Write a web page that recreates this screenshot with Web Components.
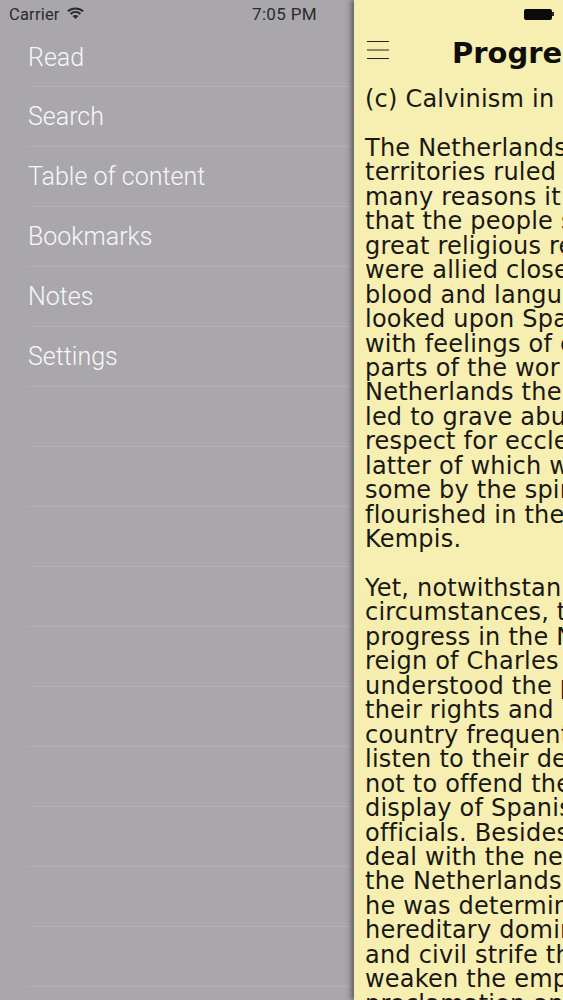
<!DOCTYPE html>
<html><head><meta charset="utf-8">
<style>
html,body{margin:0;padding:0;background:#a9a7ab;overflow:hidden;height:1000px}
</style></head><body>
<template id="t-app"><style>
:host{display:flex;width:563px;height:1000px;overflow:hidden;background:#a9a7ab}
</style><slot></slot></template>

<template id="t-menu"><style>
:host{display:block;flex:0 0 354px;width:354px;height:1000px;overflow:hidden;background:#a9a7ab}
.status{display:flex;align-items:center;height:28px;font:16.5px/28px Roboto,"Liberation Sans",sans-serif;color:#2b2a2d;padding-left:9px}
.carrier{letter-spacing:.2px;position:relative;top:.5px}
svg{margin-left:7px;display:block;margin-top:-2px}
.time{margin-left:auto;margin-right:37px;font-size:17px;letter-spacing:.35px}
.list{display:flex;flex-direction:column;padding-left:28px}
</style>
<div class="status"><span class="carrier">Carrier</span>
<svg width="17" height="12" viewBox="0 0 17 12" fill="none" stroke="#2b2a2d" stroke-width="2"><path d="M.9 4.300C5 .5 12 .5 16.100 4.300"/><path d="M3.500 7C6.400 4.400 10.600 4.400 13.500 7"/><path d="M8.500 12 5.500 9C7.200 7.500 9.800 7.500 11.500 9Z" fill="#2b2a2d" stroke="none"/></svg>
<span class="time">7:05 PM</span></div>
<div class="list"><slot></slot></div></template>

<template id="t-item"><style>
:host{display:flex;align-items:center;box-sizing:border-box;height:60px;padding-top:1px;border-bottom:1.5px solid #b2b0b4;font:300 25px/1 Roboto,"Liberation Sans",sans-serif;color:#f8f7f9}
:host(:first-child){height:58.5px}
</style><slot></slot></template>

<template id="t-reader"><style>
:host{display:block;position:relative;flex:1 1 auto;min-width:0;height:1000px;overflow:hidden;background:radial-gradient(ellipse 120px 60px at 120px 190px,#f8f2bb,transparent),radial-gradient(ellipse 110px 70px at 70px 640px,#f3ecaa,transparent),#f6efb1;box-shadow:-3px 0 5px rgba(60,58,50,.65);color:#191814;font-family:"DejaVu Sans",Verdana,sans-serif}
.status{display:flex;justify-content:flex-end;align-items:center;height:28px;padding-right:9px}
.batt{display:flex;align-items:center;gap:0}
.b{width:28px;height:11px;background:#0b0b0b;border-radius:2px}
.n{width:2px;height:4px;background:#2a2a2a}
.nav{display:flex;align-items:flex-start;height:50px}
.burger{flex:0 0 auto;display:block;margin:12px 0 0 13px}
h1{margin:0 0 0 63px;font:700 29px/50px "DejaVu Sans",Verdana,sans-serif;white-space:nowrap;color:#0f0e0b}
.body{padding:9px 0 0 11px}
</style>
<div class="status"><div class="batt"><div class="b"></div><div class="n"></div></div></div>
<div class="nav"><svg class="burger" width="22" height="20" viewBox="0 0 22 20" stroke="#26241c" stroke-width="1.100"><path d="M0 1.500H22M0 10H22M0 18.500H22"/></svg><h1>Progress</h1></div>
<div class="body"><slot></slot></div></template>

<template id="t-para"><style>
:host{display:block;font-size:24px;line-height:24.45px;letter-spacing:.22px;white-space:pre;margin-bottom:24.45px}
</style><slot></slot></template>

<x-app>
<x-menu>
<x-item>Read</x-item><x-item>Search</x-item><x-item>Table of content</x-item><x-item>Bookmarks</x-item><x-item>Notes</x-item><x-item>Settings</x-item><x-item></x-item><x-item></x-item><x-item></x-item><x-item></x-item><x-item></x-item><x-item></x-item><x-item></x-item><x-item></x-item><x-item></x-item><x-item></x-item>
</x-menu>
<x-reader>
<x-para>(c) Calvinism in</x-para>
<x-para>The Netherlands
territories ruled
many reasons it
that the people s
great religious re
were allied close
blood and langu
looked upon Spa
with feelings of e
parts of the wor
Netherlands the
led to grave abu
respect for eccle
latter of which w
some by the spir
flourished in the
Kempis.</x-para>
<x-para>Yet, notwithstan
circumstances, t
progress in the N
reign of Charles
understood the p
their rights and
country frequent
listen to their de
not to offend the
display of Spanis
officials. Besides
deal with the ne
the Netherlands
he was determin
hereditary domin
and civil strife th
weaken the emp
proclamation an</x-para>
</x-reader>
</x-app>
<script>
for (const [name,id] of [['x-app','t-app'],['x-menu','t-menu'],['x-item','t-item'],['x-reader','t-reader'],['x-para','t-para']]) {
  customElements.define(name, class extends HTMLElement {
    constructor(){super();this.attachShadow({mode:'open'}).appendChild(document.getElementById(id).content.cloneNode(true));}
  });
}
</script>
</body></html>
